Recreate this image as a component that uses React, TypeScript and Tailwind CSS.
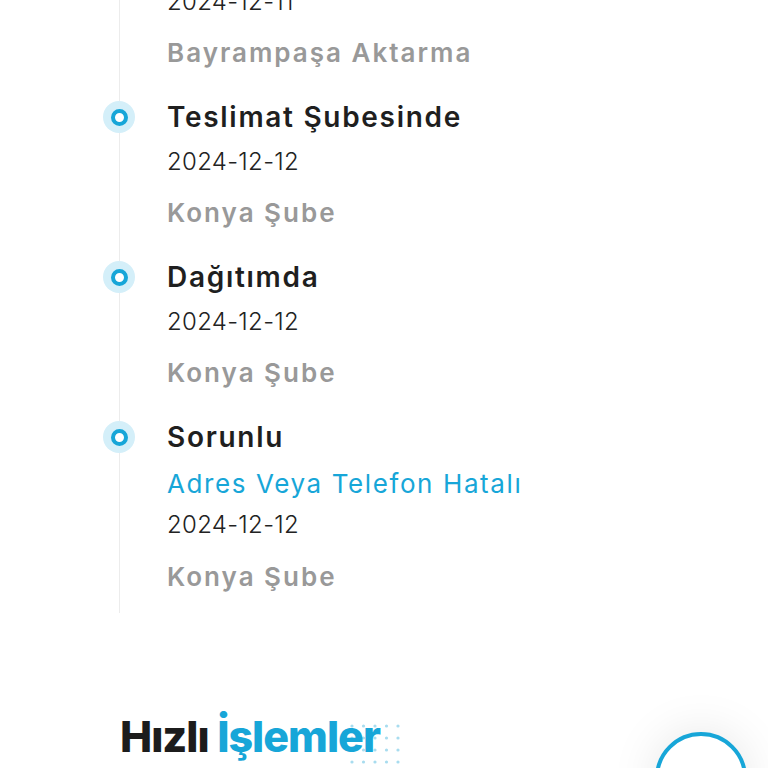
import { ChevronRight } from "lucide-react";

type Step = {
  title: string;
  note?: string;
  date: string;
  place: string;
};

const steps: Step[] = [
  { title: "Transfer Merkezinde", date: "2024-12-11", place: "Bayrampaşa Aktarma" },
  { title: "Teslimat Şubesinde", date: "2024-12-12", place: "Konya Şube" },
  { title: "Dağıtımda", date: "2024-12-12", place: "Konya Şube" },
  { title: "Sorunlu", note: "Adres Veya Telefon Hatalı", date: "2024-12-12", place: "Konya Şube" },
];

const font = { fontFamily: "Inter, 'Noto Sans', sans-serif" };

function Dot() {
  return (
    <span className="shrink-0 -ml-[17px] mt-[4px] w-[32px] h-[32px] rounded-full bg-[#d4eff9] flex items-center justify-center">
      <span className="w-[17px] h-[17px] rounded-full border-[4px] border-[#17a6d8] bg-white" />
    </span>
  );
}

export default function App() {
  return (
    <div className="relative w-full h-[768px] overflow-hidden bg-white" style={font}>
      {/* Timeline */}
      <div className="ml-[119px] mt-[-63px] border-l border-[#ececec] pb-[16px]">
        {steps.map((s, i) => (
          <div key={i} className={`flex items-start ${i < steps.length - 1 ? "mb-[24px]" : ""}`}>
            <Dot />
            <div className="ml-[32px] flex flex-col">
              <div className="text-[28px] leading-[40px] font-semibold text-[#1f1f1f] tracking-[1.7px]">
                {s.title}
              </div>
              {s.note ? (
                <>
                  <div className="mt-[7px] text-[26px] leading-[40px] text-[#17a6d8] tracking-[1.6px]">{s.note}</div>
                  <div className="mt-[1px] text-[24px] leading-[40px] font-light text-[#222] tracking-[0.3px]">{s.date}</div>
                  <div className="mt-[12px] text-[26px] leading-[40px] font-semibold text-[#999] tracking-[2px]">{s.place}</div>
                </>
              ) : (
                <>
                  <div className="mt-[5px] text-[24px] leading-[40px] font-light text-[#222] tracking-[0.3px]">{s.date}</div>
                  <div className="mt-[11px] text-[26px] leading-[40px] font-semibold text-[#999] tracking-[2px]">{s.place}</div>
                </>
              )}
            </div>
          </div>
        ))}
      </div>

      {/* Quick actions */}
      <div className="mt-[99px] ml-[120px] relative inline-block">
        <svg className="absolute left-[228px] top-[10px]" width="56" height="44" viewBox="0 0 56 44">
          {[0, 1, 2, 3].map((r) =>
            [0, 1, 2, 3, 4].map((c) => (
              <circle key={`${r}-${c}`} cx={4 + c * 11.5} cy={4 + r * 12} r="1.6" fill="#a8dcef" />
            ))
          )}
        </svg>
        <h2 className="relative text-[43px] leading-[48px] font-extrabold tracking-[-1px]">
          <span className="text-[#1c1c1c]">Hızlı </span>
          <span className="text-[#17a6d8]">İşlemler</span>
        </h2>
      </div>

      <button className="absolute left-[655px] top-[732px] w-[92px] h-[92px] rounded-full border-[4px] border-[#17a6d8] bg-white shadow-[0_0_48px_rgba(0,0,0,0.10)] flex items-center justify-center">
        <ChevronRight className="w-[34px] h-[34px] text-[#9a9a9a]" strokeWidth={1.5} />
      </button>
    </div>
  );
}
